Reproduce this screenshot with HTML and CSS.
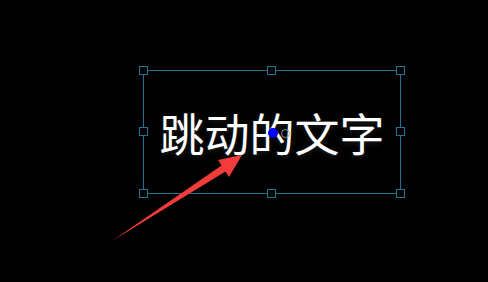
FILE: index.html
```html
<!DOCTYPE html>
<html lang="zh">
<head>
<meta charset="utf-8">
<link rel="stylesheet" href="styles.css">
</head>
<body>
<div class="stage">
  <div class="selection">
    <div class="label">跳动的文字</div>
    <span class="handle h-tl"></span>
    <span class="handle h-tc"></span>
    <span class="handle h-tr"></span>
    <span class="handle h-ml"></span>
    <span class="handle h-mr"></span>
    <span class="handle h-bl"></span>
    <span class="handle h-bc"></span>
    <span class="handle h-br"></span>
    <span class="anchor"></span>
    <span class="rotate"></span>
  </div>
  <svg class="arrow" width="488" height="282" viewBox="0 0 488 282">
    <polygon points="112,241 221.5,165.5 218,160 242,155 229,177 225.5,171.5" fill="#f23b3b"/>
  </svg>
</div>
</body>
</html>
```

FILE: styles.css
```css
html, body {
  margin: 0;
  padding: 0;
  background: #000;
}
.stage {
  position: relative;
  width: 488px;
  height: 282px;
  background: #000;
  overflow: hidden;
}
.selection {
  position: absolute;
  left: 143px;
  top: 70px;
  width: 256px;
  height: 122px;
  border: 1px solid #1f7394;
  display: flex;
  align-items: center;
  justify-content: center;
}
.label {
  font-family: "Noto Sans CJK SC", "Noto Sans", sans-serif;
  font-size: 45px;
  line-height: 1;
  color: #fff;
  white-space: nowrap;
  text-shadow: 0 2px 5px rgba(255,255,255,0.12);
  margin-top: 1px;
}
.handle {
  position: absolute;
  width: 7px;
  height: 7px;
  border: 1px solid #1f7394;
  background: #000;
}
.h-tl { left: -5px; top: -5px; }
.h-tc { left: 123px; top: -5px; }
.h-tr { right: -5px; top: -5px; }
.h-ml { left: -5px; top: 56px; }
.h-mr { right: -5px; top: 56px; }
.h-bl { left: -5px; bottom: -5px; }
.h-bc { left: 123px; bottom: -5px; }
.h-br { right: -5px; bottom: -5px; }
.anchor {
  position: absolute;
  left: 124px;
  top: 57px;
  width: 10px;
  height: 10px;
  border-radius: 50%;
  background: #0000ff;
}
.rotate {
  position: absolute;
  left: 137px;
  top: 58px;
  width: 7px;
  height: 7px;
  border-radius: 50%;
  border: 1px solid #9a9a9a;
  background: transparent;
}
.arrow {
  position: absolute;
  left: 0;
  top: 0;
}
```
